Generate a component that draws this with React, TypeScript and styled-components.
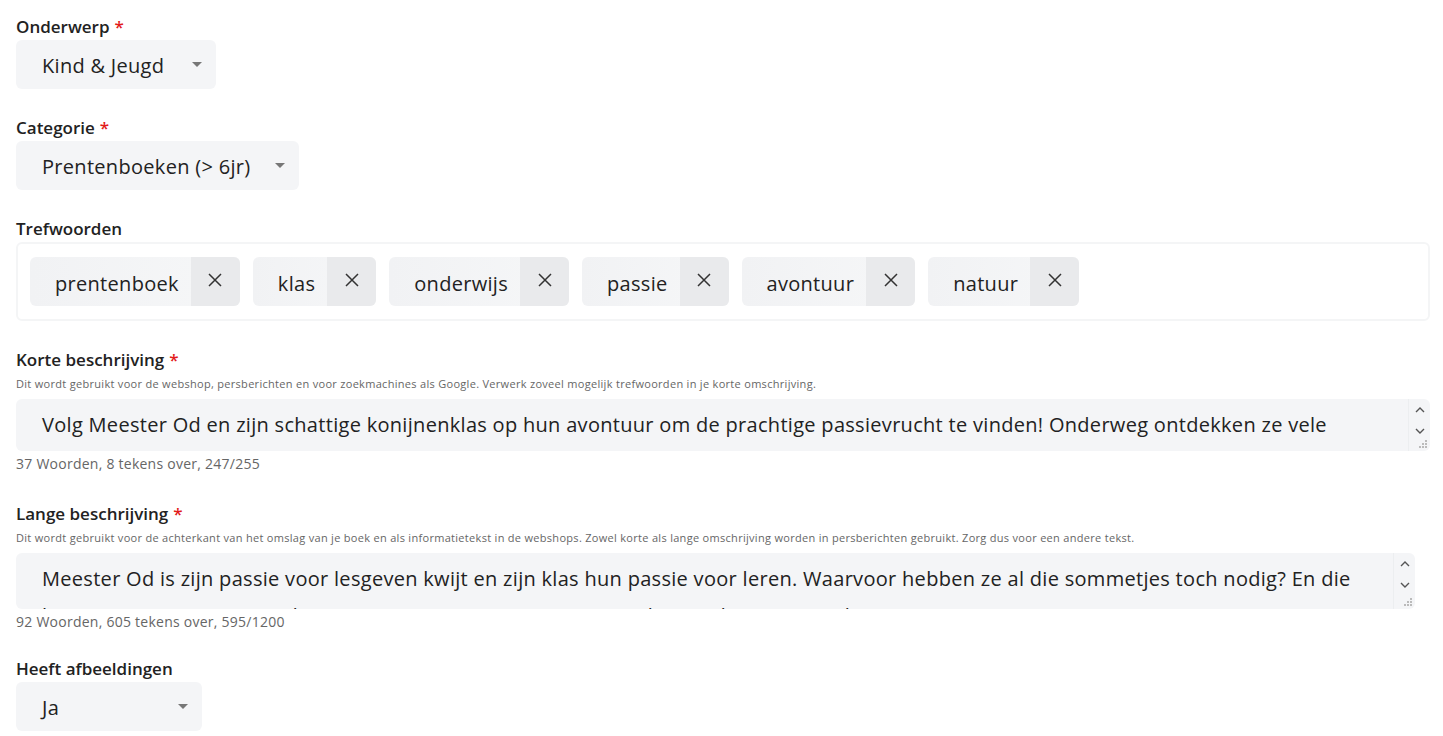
import styled, { createGlobalStyle } from 'styled-components'

const font = `"Open Sans", "Noto Sans", sans-serif`

const GlobalStyle = createGlobalStyle`
  body {
    margin: 0;
    background: #fff;
    font-family: ${font};
    color: #222;
  }
`

const Form = styled.div`
  display: flex;
  flex-direction: column;
  padding: 14px 13px 0 16px;
`

const Field = styled.div<{ gap?: number }>`
  display: flex;
  flex-direction: column;
  align-items: flex-start;
  margin-bottom: ${p => p.gap ?? 26}px;
`

const Label = styled.div`
  font-size: 17px;
  font-weight: 600;
  line-height: 26px;
  color: #222;
`

const Req = styled.span`
  color: #e21b1b;
  margin-left: 5px;
`

const Help = styled.div`
  font-size: 11px;
  line-height: 14px;
  color: #666;
  margin: 4px 0 8px;
  letter-spacing: 0.3px;
`

const Counter = styled.div`
  font-size: 14px;
  line-height: 20px;
  color: #666;
  margin-top: 3px;
  letter-spacing: 0.25px;
`

const Select = styled.div<{ width: number }>`
  width: ${p => p.width}px;
  height: 49px;
  box-sizing: border-box;
  background: #f4f5f7;
  border-radius: 6px;
  display: flex;
  align-items: center;
  justify-content: space-between;
  padding: 2px 14px 0 26px;
  font-size: 20px;
  letter-spacing: 0.3px;
  color: #222;
`

const Caret = styled.span`
  width: 0;
  height: 0;
  border-left: 5px solid transparent;
  border-right: 5px solid transparent;
  border-top: 5px solid #777;
  margin-bottom: 2px;
`

const TagBox = styled.div`
  align-self: stretch;
  border: 2px solid #f4f5f6;
  border-radius: 6px;
  padding: 13px 12px;
  display: flex;
  flex-wrap: wrap;
  gap: 13px;
`

const Tag = styled.div`
  display: flex;
  height: 49px;
  border-radius: 6px;
  overflow: hidden;
  background: linear-gradient(90deg, #f1f2f4, #f6f7f8);
`

const TagText = styled.span`
  display: flex;
  align-items: center;
  padding: 3px 12px 0 25px;
  font-size: 20px;
  letter-spacing: 0.3px;
  color: #222;
`

const TagRemove = styled.span`
  width: 49px;
  display: flex;
  align-items: center;
  justify-content: center;
  background: #e9eaec;
  padding-bottom: 4px;
`

const AreaWrap = styled.div<{ right: number; height: number }>`
  position: relative;
  align-self: stretch;
  margin-right: ${p => p.right}px;
  height: ${p => p.height}px;
  background: #f4f5f7;
  border-radius: 6px;
  overflow: hidden;
`

const Area = styled.textarea`
  display: block;
  width: 100%;
  height: 100%;
  box-sizing: border-box;
  border: none;
  outline: none;
  resize: none;
  overflow: hidden;
  background: transparent;
  padding: 7px 40px 0 26px;
  font-family: ${font};
  font-size: 20px;
  line-height: 37px;
  letter-spacing: 0.3px;
  color: #222;
`

const ScrollBar = styled.div`
  position: absolute;
  top: 0;
  right: 0;
  bottom: 0;
  width: 22px;
  border-left: 1px solid #eceef0;
  display: flex;
  flex-direction: column;
  align-items: center;
  padding-top: 5px;
  box-sizing: border-box;
`

const Chevron = ({ up }: { up?: boolean }) => (
  <svg width="12" height="12" viewBox="0 0 12 12" style={{ marginBottom: 9 }}>
    <path
      d={up ? 'M2 8 L6 4 L10 8' : 'M2 4 L6 8 L10 4'}
      fill="none"
      stroke="#555"
      strokeWidth="1.4"
    />
  </svg>
)

const Grip = () => (
  <svg width="10" height="10" viewBox="0 0 10 10" style={{ position: 'absolute', right: 2, bottom: 2 }}>
    {[
      [7, 1],
      [4, 4],
      [7, 4],
      [1, 7],
      [4, 7],
      [7, 7],
    ].map(([x, y]) => (
      <rect key={`${x}-${y}`} x={x} y={y} width="2" height="2" fill="#bbb" />
    ))}
  </svg>
)

const XIcon = () => (
  <svg width="16" height="16" viewBox="0 0 16 16">
    <path d="M2 2 L14 14 M14 2 L2 14" stroke="#333" strokeWidth="1.5" fill="none" />
  </svg>
)

const tags = ['prentenboek', 'klas', 'onderwijs', 'passie', 'avontuur', 'natuur']

const korte =
  'Volg Meester Od en zijn schattige konijnenklas op hun avontuur om de prachtige passievrucht te vinden! Onderweg ontdekken ze vele verrassende dingen over de natuur en over zichzelf.'

const lange =
  'Meester Od is zijn passie voor lesgeven kwijt en zijn klas hun passie voor leren. Waarvoor hebben ze al die sommetjes toch nodig? En die lettertjes, wat moeten ze daar nou mee? Samen gaan ze op zoek naar de passievrucht.'

function TextBox({ value, right, height }: { value: string; right: number; height: number }) {
  return (
    <AreaWrap right={right} height={height}>
      <Area readOnly value={value} />
      <ScrollBar>
        <Chevron up />
        <Chevron />
        <Grip />
      </ScrollBar>
    </AreaWrap>
  )
}

export default function App() {
  return (
    <>
      <GlobalStyle />
      <Form>
        <Field>
          <Label>
            Onderwerp<Req>*</Req>
          </Label>
          <Select width={200}>
            Kind &amp; Jeugd
            <Caret />
          </Select>
        </Field>
        <Field gap={26}>
          <Label>
            Categorie<Req>*</Req>
          </Label>
          <Select width={283}>
            Prentenboeken (&gt; 6jr)
            <Caret />
          </Select>
        </Field>
        <Field gap={26}>
          <Label>Trefwoorden</Label>
          <TagBox>
            {tags.map(t => (
              <Tag key={t}>
                <TagText>{t}</TagText>
                <TagRemove>
                  <XIcon />
                </TagRemove>
              </Tag>
            ))}
          </TagBox>
        </Field>
        <Field gap={27}>
          <Label>
            Korte beschrijving<Req>*</Req>
          </Label>
          <Help>
            Dit wordt gebruikt voor de webshop, persberichten en voor zoekmachines als Google. Verwerk
            zoveel mogelijk trefwoorden in je korte omschrijving.
          </Help>
          <TextBox value={korte} right={0} height={52} />
          <Counter>37 Woorden, 8 tekens over, 247/255</Counter>
        </Field>
        <Field gap={24}>
          <Label>
            Lange beschrijving<Req>*</Req>
          </Label>
          <Help>
            Dit wordt gebruikt voor de achterkant van het omslag van je boek en als informatietekst in de
            webshops. Zowel korte als lange omschrijving worden in persberichten gebruikt. Zorg dus voor
            een andere tekst.
          </Help>
          <TextBox value={lange} right={15} height={56} />
          <Counter>92 Woorden, 605 tekens over, 595/1200</Counter>
        </Field>
        <Field gap={0}>
          <Label>Heeft afbeeldingen</Label>
          <Select width={186}>
            Ja
            <Caret />
          </Select>
        </Field>
      </Form>
    </>
  )
}
